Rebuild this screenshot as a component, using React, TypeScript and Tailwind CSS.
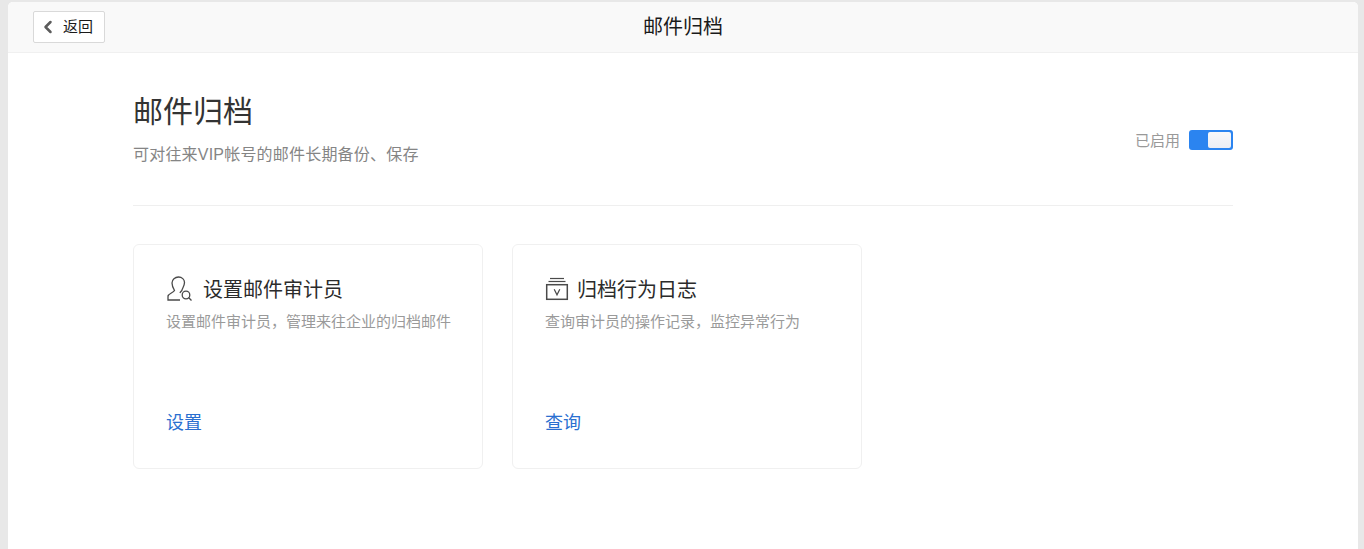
import { ChevronLeft } from 'lucide-react';

const cjk = 'font-["Liberation_Sans","Noto_Sans_CJK_SC",sans-serif]';

function AuditorIcon() {
  return (
    <svg width="26" height="26" viewBox="0 0 26 26" fill="none" stroke="#4a4a4a" strokeWidth="1.3">
      <path d="M14 24H2v-3.500c0-3 5.200-3.500 6.500-6C7 12 6 9.500 6 7c0-3.500 3-6 6.500-6s6 2.500 6 5.500c0 3-1.800 5.500-2.500 7.500-.3 1 -1.500 1.500 -2 3" />
      <circle cx="20" cy="19" r="3.800" />
      <path d="M22.800 21.800L25.500 24.500" />
    </svg>
  );
}

function ArchiveIcon() {
  return (
    <svg width="24" height="24" viewBox="0 0 24 24" fill="none" stroke="#4a4a4a" strokeWidth="1.2">
      <path d="M5 1.500h14" />
      <path d="M3.500 4.500h17" />
      <rect x="1.700" y="7.700" width="20.600" height="14.600" strokeWidth="1.500" />
      <path d="M9.200 12.200l2.800 5.600 2.800-5.600" />
    </svg>
  );
}

function Card({
  icon,
  title,
  desc,
  action,
  titleGap,
}: {
  icon: React.ReactNode;
  title: string;
  desc: string;
  action: string;
  titleGap: string;
}) {
  return (
    <div className="w-[350px] h-[225px] bg-white border border-[#f0f0f0] rounded-md flex flex-col pt-[31px] px-[32px]">
      <div className={`flex items-center h-[26px] ${titleGap}`}>
        {icon}
        <span className="text-[20px] leading-[26px] pt-[2px] text-[#2b2b2b]">{title}</span>
      </div>
      <p className="mt-[10px] text-[15px] leading-[20px] whitespace-nowrap text-[#9a9a9a]">{desc}</p>
      <a className="mt-auto mb-[33px] text-[18px] leading-[24px] text-[#2a6fd0]">{action}</a>
    </div>
  );
}

export default function App() {
  return (
    <div className={`h-[549px] overflow-hidden bg-[#e8e8e8] pt-[2px] pl-[8px] pr-[6px] ${cjk}`}>
      <div className="h-full bg-white rounded-t-[5px] overflow-hidden">
        <header className="relative h-[51px] bg-[#f9f9f9] border-b border-[#f0f0f0] flex items-center justify-center">
          <button className="absolute left-[25px] top-[9px] w-[72px] h-[32px] bg-white border border-[#d9d9d9] rounded-[2px] flex items-center pl-[4px] text-[15px] text-[#1a1a1a]">
            <ChevronLeft size={20} strokeWidth={3} className="text-[#5c5c5c]" />
            <span className="ml-[5px]">返回</span>
          </button>
          <h1 className="text-[20px] leading-[26px] text-[#1a1a1a]">邮件归档</h1>
        </header>

        <main className="ml-[125px] w-[1100px]">
          <div className="h-[153px] border-b border-[#efefef] flex items-start justify-between">
            <div className="pt-[39px]">
              <h2 className="text-[30px] leading-[40px] text-[#333333]">邮件归档</h2>
              <p className="mt-[13px] text-[16px] leading-[20px] tracking-[0.2px] text-[#858585]">可对往来VIP帐号的邮件长期备份、保存</p>
            </div>
            <div className="mt-[77px] flex items-start">
              <span className="text-[15px] leading-[20px] pt-[1px] text-[#999999]">已启用</span>
              <span className="ml-[9px] w-[44px] h-[20px] bg-[#2b84f0] rounded-[3px] flex justify-end items-center pr-[2px]">
                <span className="w-[23px] h-[16px] bg-gradient-to-b from-[#f8f8fa] to-[#eceef5] rounded-[2px]" />
              </span>
            </div>
          </div>

          <div className="mt-[38px] flex gap-[29px]">
            <Card
              icon={<AuditorIcon />}
              title="设置邮件审计员"
              desc="设置邮件审计员，管理来往企业的归档邮件"
              action="设置"
              titleGap="gap-[11px]"
            />
            <Card
              icon={<ArchiveIcon />}
              title="归档行为日志"
              desc="查询审计员的操作记录，监控异常行为"
              action="查询"
              titleGap="gap-[8px]"
            />
          </div>
        </main>
      </div>
    </div>
  );
}
